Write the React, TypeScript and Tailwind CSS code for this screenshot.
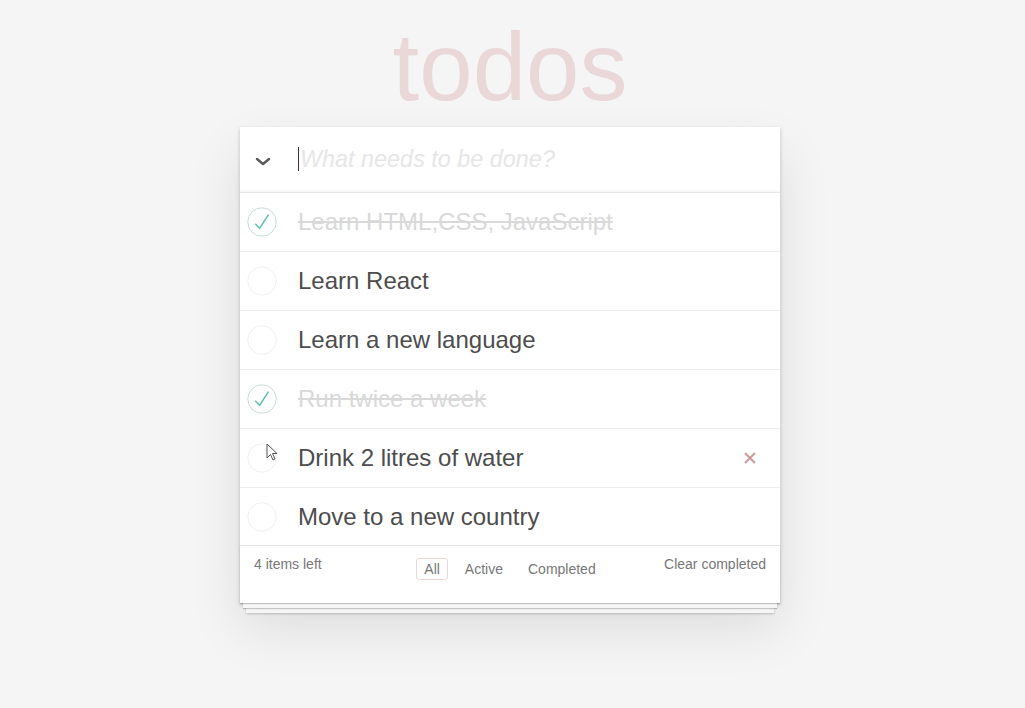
import React from "react";

type Todo = { text: string; done: boolean; hover?: boolean };

const todos: Todo[] = [
  { text: "Learn HTML,CSS, JavaScript", done: true },
  { text: "Learn React", done: false },
  { text: "Learn a new language", done: false },
  { text: "Run twice a week", done: true },
  { text: "Drink 2 litres of water", done: false, hover: true },
  { text: "Move to a new country", done: false },
];

function Check({ done }: { done: boolean }) {
  return (
    <svg width="32" height="32" viewBox="-4 -4 108 108" className="shrink-0">
      <circle cx="50" cy="50" r="48" fill="none" stroke={done ? "#bddad5" : "#ededed"} strokeWidth="3" />
      {done && <path d="M72 25L42 71 27 56" fill="none" stroke="#5dc2af" strokeWidth="5" />}
    </svg>
  );
}

function Cursor() {
  return (
    <svg width="13" height="19" viewBox="0 0 13 19" className="absolute left-[26px] top-[14px]">
      <path d="M1 1 L1 15 L4.5 11.5 L7 17 L9 16 L6.5 10.5 L11 10.5 Z" fill="#ffffff" stroke="#555" strokeWidth="1" strokeLinejoin="round" />
    </svg>
  );
}

export default function App() {
  return (
    <div className="min-h-[708px] w-full bg-[#f5f5f5] pt-[17px] font-['Liberation_Sans',Arial,sans-serif] text-[#4d4d4d]">
      <div className="ml-[240px] w-[540px]">
        <h1 className="h-[100px] text-center text-[96px] leading-[100px] font-normal text-[rgba(175,47,47,0.15)]">todos</h1>
        <section className="mt-[10px] bg-white shadow-[0_2px_4px_0_rgba(0,0,0,0.2),0_25px_50px_0_rgba(0,0,0,0.1)]">
          <header className="flex h-[65px] items-center shadow-[inset_0_-2px_1px_rgba(0,0,0,0.03)]">
            <div className="flex w-[58px] shrink-0 justify-center pr-[12px] pt-[4px]">
              <svg width="16" height="10" viewBox="0 0 16 10">
                <polyline points="2,2 8,7 14,2" fill="none" stroke="#5a5a5a" strokeWidth="2.4" strokeLinecap="round" strokeLinejoin="round" />
              </svg>
            </div>
            <div className="flex items-center">
              <span className="mr-[1px] h-[24px] w-[1px] bg-[#333]" />
              <span className="text-[23.4px] italic text-[#e6e6e6]">What needs to be done?</span>
            </div>
          </header>
          <ul className="border-t border-[#e6e6e6]">
            {todos.map((t, i) => (
              <li
                key={i}
                className={`relative flex items-center ${i < todos.length - 1 ? "h-[59px] border-b border-[#ededed]" : "h-[57px]"}`}
              >
                <div className="flex w-[58px] shrink-0 pl-[6px]">
                  <Check done={t.done} />
                </div>
                <span
                  className={`flex-1 pb-[1px] text-[24px] leading-[29px] ${t.done ? "text-[#d9d9d9] line-through" : "text-[#4d4d4d]"}`}
                >
                  {t.text}
                </span>
                {t.hover && (
                  <>
                    <svg width="12" height="12" viewBox="0 0 12 12" className="mr-[24px]">
                      <path d="M1 1L11 11M11 1L1 11" stroke="#cc9a9a" strokeWidth="2" />
                    </svg>
                    <Cursor />
                  </>
                )}
              </li>
            ))}
          </ul>
          <footer className="grid h-[58px] grid-cols-[1fr_auto_1fr] items-start border-t border-[#e6e6e6] px-[14px] pt-[8px] text-[14px] leading-[20px] text-[#777] shadow-[0_1px_1px_rgba(0,0,0,0.2),0_8px_0_-3px_#f6f6f6,0_9px_1px_-3px_rgba(0,0,0,0.2),0_16px_0_-6px_#f6f6f6,0_17px_2px_-6px_rgba(0,0,0,0.2)]">
            <span>4 items left</span>
            <div className="mt-[4px] flex gap-[9px]">
              <span className="rounded-[3px] border border-[rgba(175,47,47,0.2)] px-[7px] leading-[20px]">All</span>
              <span className="rounded-[3px] border border-transparent px-[7px] leading-[20px]">Active</span>
              <span className="rounded-[3px] border border-transparent px-[7px] leading-[20px]">Completed</span>
            </div>
            <span className="justify-self-end">Clear completed</span>
          </footer>
        </section>
      </div>
    </div>
  );
}
